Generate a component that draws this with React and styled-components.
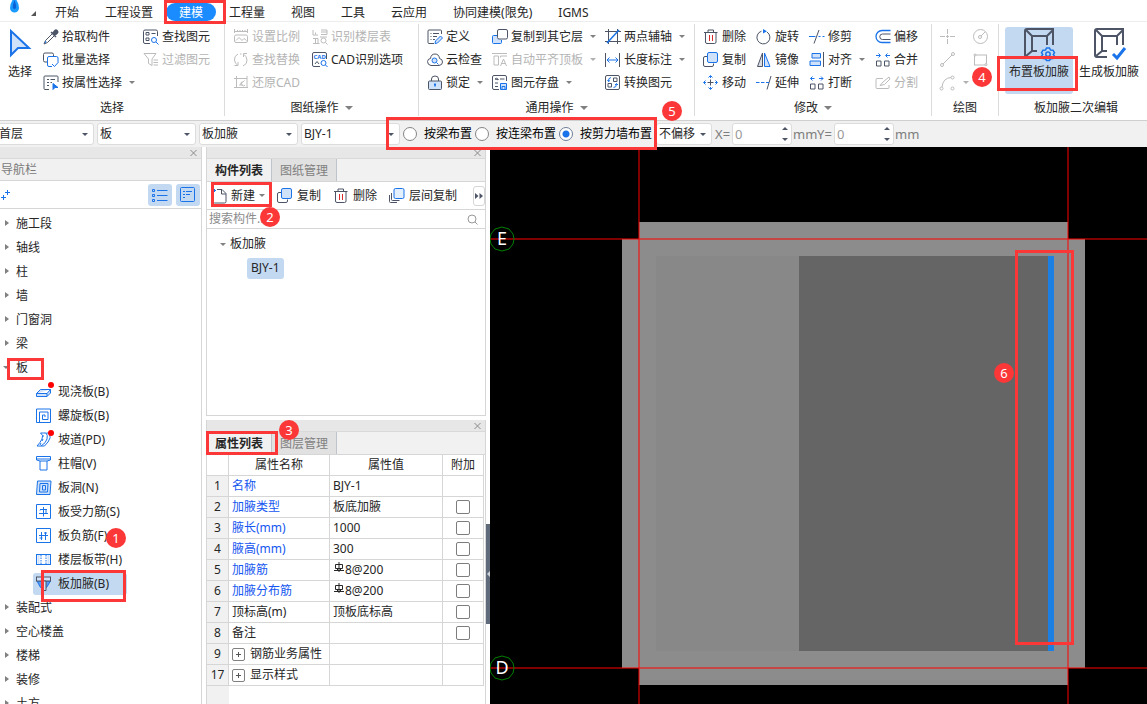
import React, { useState } from "react";
import styled, { createGlobalStyle, css } from "styled-components";

const DARK = "#4c5466";
const BLUE = "#1a73e8";
const PALE = "#cfe2fa";
const LINE = "#d6d6d6";
const PICK = "#c2d9f1";

const GlobalStyle = createGlobalStyle`
    * {
        box-sizing: border-box;
    }
    body {
        margin: 0;
        background: #fff;
    }
    body, button, input, select, table {
        font-family: "Noto Sans", "Noto Sans CJK SC", sans-serif;
        font-size: 12px;
        line-height: 16px;
        color: #262626;
    }
    button {
        margin: 0;
        padding: 0;
        border: 0;
        background: none;
        white-space: nowrap;
    }
`;

const Page = styled.div`
    display: flex;
    flex-direction: column;
    height: 100vh;
    overflow: hidden;
`;

/* ---------- annotations ---------- */

const Frame = styled.span`
    position: absolute;
    z-index: 5;
    left: ${p => p.$x}px;
    top: ${p => p.$y}px;
    width: ${p => p.$w}px;
    height: ${p => p.$h}px;
    border: 3px solid #fb3737;
    pointer-events: none;
`;

const Badge = styled.span`
    position: absolute;
    z-index: 6;
    left: ${p => p.$x}px;
    top: ${p => p.$y}px;
    width: 20px;
    height: 20px;
    border-radius: 50%;
    background: #fb3737;
    color: #fff;
    font-size: 13px;
    font-weight: 400;
    line-height: 20px;
    text-align: center;
`;

/* ---------- small parts ---------- */

const Caret = styled.span`
    flex: none;
    width: 0;
    height: 0;
    border: 3px solid transparent;
    ${p => p.$dir === "right"
        ? css`border-left: 4px solid #808080; border-right: 0;`
        : p.$dir === "up"
        ? css`border-bottom: 3px solid ${p.$color || "#808080"}; border-top: 0;`
        : css`border-top: 3px solid ${p.$color || "#808080"}; border-bottom: 0;`}
`;

const Svg = styled.svg`
    flex: none;
    display: block;
    overflow: visible;
`;

const shapes = {
    dropper: (d, b) => <>
        <path d="M9 5 2.500 11.500 1 15l3.500-1.500L11 7" stroke={d} />
        <path d="M8 3l5 5M9.500 4.500 12 1.500q1-1 2.200.2t.2 2.300L11.500 6.500z" stroke={d} fill={d} strokeWidth="1.500" />
        <path d="M3 12l-1 2" stroke={b} />
    </>,
    batch: (d, b) => <>
        <path d="M4 10H2q-1.500 0-1.500-1.500v-6Q.500 1 2 1h7q1.500 0 1.500 1.500V4" stroke={d} />
        <path d="M9 14.500H6Q4.500 14.500 4.500 13V6q0-1.500 1.500-1.500h7.500q1.500 0 1.500 1.500v4M9 12l2.500 2.500L15.500 10" stroke={b} />
    </>,
    attrPick: (d, b) => <>
        <path d="M6 14.500H2Q1 14.500 1 13.500V2Q1 1 2 1h12q1 0 1 1v5M4 4.500h2M7.500 4.500H12M4 7.500h2M7.500 7.500H9M4 10.500h2" stroke={d} />
        <path d="M10 8.500v6l2-2h3z" fill={b} stroke={b} />
    </>,
    findEl: (d, b) => <>
        <path d="M7 14.500H2Q.500 14.500.500 13V2.500Q.500 1 2 1h11q1.500 0 1.500 1.500V7M3 3.500h3v2.500H3zM3 9h3v2.500H3zM8.500 4.500h4" stroke={d} />
        <circle cx="11" cy="11" r="2.500" stroke={b} /><path d="M13 13l2.500 2.500" stroke={b} />
    </>,
    filter: d => <path d="M1 1.500h12L9 7v6.500L5.500 11.500V7zM10.500 8H15M10.500 10.500H15M10.500 13H15" stroke={d} />,
    ratio: d => <path d="M1.500 0v4M14.500 0v4M2 2.500h12M4.500 1v1.500M7 1v1.500M9.500 1v1.500M12 1v1.500M3 6h10q1.500 0 1.500 1.500V12q0 1.500-1.500 1.500H3Q1.500 13.500 1.500 12V7.500Q1.500 6 3 6zM3 11.500l3-3 3 3 2-2 2.500 2" stroke={d} />,
    replace: d => <path d="M5 2Q1 4 1.500 8t3 5M1.500 13.500H5V10M10 14q4.500-2 4-6t-3-5.500M14 1.500h-3.500V5M7 2l1.500 0" stroke={d} />,
    restore: d => <path d="M3.500 1v12M1 3.500h13M1 12.500h14M14 1v12M11.500 5.500 6.500 10h3M9 6.500q-2 1.500 0 3.500t3 0" stroke={d} />,
    floors: d => <><path d="M1 1v5h5M3.500 3.500v2M9 1h6v4.500H9M9 3h6M1 14.500h6.500M1 9.500h5v5M3.500 9.500v5M8 8h7" stroke={d} /><circle cx="11.500" cy="11.500" r="2.500" stroke={d} /><path d="M13.500 13.500l2 2" stroke={d} /></>,
    cad: (d, b) => <>
        <path d="M8 14.500H2Q.500 14.500.500 13V2Q.500.500 2 .500h11q1.500 0 1.500 1.500v5M3 12l2-2.500L7 12" stroke={d} />
        <text x="1.500" y="7" fontSize="6" fontWeight="700" fill={b} stroke="none">CAD</text>
        <circle cx="11.500" cy="11" r="2.500" stroke={b} /><path d="M13.500 13l2 2" stroke={b} />
    </>,
    define: (d, b) => <>
        <path d="M7 14.500H2Q1 14.500 1 13.500V2Q1 1 2 1h11.500q1 0 1 1v3M3.500 4.500h1M6 4.500h6M3.500 7.500h1M6 7.500h4M3.500 10.500h1M6 10.500h2" stroke={d} />
        <path d="M8 14.500l.500-2.500 5-5 2 2-5 5z" stroke={b} fill={PALE} />
    </>,
    cloud: (d, b) => <>
        <path d="M4 13.500Q.500 13 .500 9.500 1 6.500 3.500 6.500 4 2 8 2t4.500 4.500q3 .500 3 3.500t-3.500 3.500z" stroke={d} />
        <circle cx="7.500" cy="8.500" r="2.500" stroke={b} fill={PALE} /><path d="M9.500 10.500l2 2" stroke={b} />
    </>,
    lock: (d, b) => <>
        <path d="M4.500 6V4q0-3 3.500-3t3.500 3v2" stroke={d} />
        <rect x="1.500" y="6" width="13" height="8.500" rx="1" stroke={d} fill={PALE} />
        <path d="M8 8.500v3M7 9.500h2" stroke={b} strokeWidth="1.500" />
    </>,
    copyTo: (d, b) => <>
        <path d="M5 6.500H1.500q-1 0-1 1v6q0 1 1 1h7q1 0 1-1V11" stroke={b} fill={PALE} />
        <rect x="5.500" y=".5" width="10" height="9.500" rx="1.500" stroke={d} fill="#fff" />
    </>,
    flush: d => <path d="M0 1.500h15M2 4h4.500v9H2zM8.500 14l3-7 3 7M9.500 11.500h4M8.500 5.500V4H15" stroke={d} />,
    save: (d, b) => <>
        <path d="M7 14.500H2Q.500 14.500.500 13V2Q.500.500 2 .500h11q1.500 0 1.500 1.500v4M3 4q1.500-1.500 3 0t-3 0M8 4h4.500M3 8h3M3 11.500h3" stroke={d} />
        <path d="M8.500 8.500h6v6h-6zM10 14v-2.500h3V14" stroke={b} fill={PALE} />
    </>,
    twoAxis: (d, b) => <>
        <path d="M3.500 0v15M12.500 0v15M0 2.500h16M0 12.500h16" stroke={d} />
        <path d="M2 14L14 1" stroke={b} strokeWidth="1.500" />
    </>,
    length: (d, b) => <>
        <path d="M.500 1v14M14.500 1v14" stroke={d} />
        <path d="M2 8h11M4.500 5.500 2 8l2.500 2.500M10.500 5.500 13 8l-2.500 2.500" stroke={b} />
    </>,
    convert: (d, b) => <>
        <rect x=".5" y=".5" width="14" height="14" rx="1.500" stroke={d} />
        <path d="M8.500 3h3.500v3.500H8.500zM3 8.500h3.500V12H3z" stroke={d} />
        <path d="M6 2.500Q3 3 3.500 6.500M2.500 5l1 1.500L5 5.500M8.500 12.500q3 0 3-3.500M10 10l1.500-1.500L13 10" stroke={b} />
    </>,
    trash: d => <>
        <path d="M1 3.500h13.500M5 3V1h5.500v2M2.500 3.500V13q0 1.500 1.500 1.500h7.500q1.500 0 1.500-1.500V3.500" stroke={d} />
        <path d="M6.500 6v6M9.500 6v6" stroke="#d92b2b" />
    </>,
    rotate: (d, b) => <>
        <path d="M5.500 2.200A6.500 6.500 0 1 0 11 3" stroke={d} />
        <path d="M7 0l4 2.200L7 4.500z" fill={b} stroke="none" />
    </>,
    trim: (d, b) => <><path d="M10 1L5 14.500" stroke={d} /><path d="M0 7.500h6.500M9.500 7.500h2M13.500 7.500h2" stroke={b} /></>,
    offset: (d, b) => <>
        <path d="M15.500 1.500H7a6 6 0 0 0 0 12h8.500" stroke={b} strokeWidth="1.300" />
        <path d="M15.500 5H7.500a2.700 2.700 0 0 0 0 5.500h8" stroke={d} />
    </>,
    copy: (d, b) => <>
        <path d="M4 4.500H2q-1.500 0-1.500 1.500v7q0 1.500 1.500 1.500h7q1.500 0 1.500-1.500v-1.500" stroke={d} />
        <rect x="4.500" y=".5" width="10" height="10" rx="1.500" stroke={b} fill={PALE} />
    </>,
    mirror: (d, b) => <>
        <path d="M6.500 1v13.500H1.500z" stroke={d} fill="#dadde2" />
        <path d="M8.500 1v13.500H14z" stroke={b} fill={PALE} />
    </>,
    align: (d, b) => <>
        <path d="M14.500 0v15" stroke={d} />
        <path d="M3 1.500h8.500V6H3zM1 9h10.500v4.500H1z" stroke={b} fill={PALE} />
    </>,
    merge: (d, b) => <>
        <path d="M1.500 9H6v5H1.500zM9.500 9H14v5H9.500z" stroke={d} />
        <path d="M1 3.500h4M3.500 1.500l2 2-2 2M15 3.500h-4M12.500 1.500l-2 2 2 2" stroke={b} />
    </>,
    move: (d, b) => <>
        <path d="M7.500 4.500v6M4.500 7.500h6" stroke={d} />
        <path d="M5.500 2.500l2-2 2 2M5.500 12.500l2 2 2-2M2.500 5.500l-2 2 2 2M12.500 5.500l2 2-2 2M7.500 1v2M7.500 12v2M1 7.500h2M12 7.500h2" stroke={b} />
    </>,
    extend: (d, b) => <><path d="M15 1l-4 13.500" stroke={d} /><path d="M0 7.500h3.500M5 7.500h3.500M10 7.500h3" stroke={b} /></>,
    breakUp: (d, b) => <>
        <path d="M1.500 9H6v5H1.500zM9.500 9H14v5H9.500z" stroke={d} />
        <path d="M1.500 3.500h4M3.500 1.500l-2 2 2 2M14 3.500h-4M12 1.500l2 2-2 2" stroke={b} />
    </>,
    split: d => <path d="M8 3.500H2Q1 3.500 1 4.500v8q0 1 1 1h11q1 0 1-1V10M5 10.500 8 7l6-5 1 2-5.500 5.500z" stroke={d} />,
    point: d => <path d="M7.500 0v5M7.500 10v5M0 7.500h5M10 7.500h5M6 7.500h3M7.500 6v3" stroke={d} />,
    circle: d => <><circle cx="7.500" cy="7.500" r="7" stroke={d} /><circle cx="7" cy="8" r="1.500" stroke={d} /><path d="M8 7l4-4" stroke={d} /></>,
    segment: d => <><circle cx="2" cy="13" r="1.500" stroke={d} /><circle cx="13" cy="2" r="1.500" stroke={d} /><path d="M3 12l9-9" stroke={d} /></>,
    rect: d => <><rect x="1.500" y="3" width="12" height="10" stroke={d} /><circle cx="2" cy="3" r="1" stroke={d} fill="#fff" /><circle cx="13" cy="12.500" r="1" stroke={d} fill="#fff" /></>,
    arc: d => <><circle cx="1.500" cy="13.500" r="1.500" stroke={d} /><circle cx="12.500" cy="2.500" r="1.500" stroke={d} /><circle cx="12.500" cy="13.500" r="1.500" stroke={d} /><path d="M2 12Q3 3 11 2.500" stroke={d} /></>,
    newDoc: (d, b) => <>
        <path d="M6 1.500h5l4 4v8q0 1.500-1.500 1.500h-10Q2 15 2 13.500V7M10.500 1.500v4.500H15" stroke={d} />
        <path d="M2.500 0v5M0 2.500h5M1 1l3 3M4 1L1 4" stroke={b} />
    </>,
    copyFloor: (d, b) => <>
        <path d="M.500 7v6.500q0 1 1 1H8M2.500 5v6.500q0 1 1 1h7" stroke={d} />
        <rect x="5" y=".5" width="10" height="10" rx="1.500" stroke={b} fill="#e4f0fd" />
    </>,
    slab: (d, b) => <path d="M4.500 5.500h10l-3.500 4H.500zM.500 9.500v3H11l3.500-3.500V5.500M11 9.500v3" stroke={b} fill={PALE} />,
    spiral: (d, b) => <path d="M.500 1h14v13.500H.500zM3.500 14.500V4h8.500v7.500H6.500V7h2.500v2" stroke={b} />,
    ramp: (d, b) => <path d="M4.500 1q3.500 2 1.500 6T1 14h4q5-3 6-7t-1-6zM10.500 1h3q2 5-1.500 9l-3.500 4H5M7 3v2M7 7l-1 2M5 11l-1 2" stroke={b} fill="none" />,
    cap: (d, b) => <path d="M.500.500h14V4L11 5v9H4V5L.500 4zM.500 3h14M4 5h7" stroke={b} />,
    hole: (d, b) => <><path d="M1.500 1H15l-1 13.500H.500z" stroke={b} fill={PALE} /><path d="M4 3.500h8l-.5 8.500H3.500zM6.500 5.500h3v4.500h-3z" stroke={b} /></>,
    barS: (d, b) => <path d="M.500.500h14v14H.500zM4 5.500h7M3 9.500h9M7.500 3v9.500M5 5.500l-1 1M10 5.500v4" stroke={b} />,
    barF: (d, b) => <path d="M.500.500h14v14H.500zM3 7.500h9M5.500 4v8M9.500 4v8M3.500 10h3M8 5h3" stroke={b} />,
    strip: (d, b) => <><rect x=".5" y="2.500" width="14" height="10" stroke={b} /><path d="M5 3v9.500M10 3v9.500" stroke={b} strokeDasharray="1.500 1" /><path d="M2.500 3v9M12.500 3v9" stroke={PALE} strokeWidth="2" /></>,
    haunch: (d, b) => <><path d="M1 5h13.500L10.500 11.500H4.500z" stroke={b} fill="#5a9cf0" /><rect x=".5" y="1" width="14" height="4" stroke={d} fill={PALE} /><path d="M5.500 5h4.500v9.500H5.500z" stroke={d} fill={PALE} /></>
};

function Icon({ name, off }) {
    return (
        <Svg width="16" height="16" viewBox="0 0 16 16" fill="none" aria-hidden="true">
            {off ? shapes[name]("#bcbcbc", "#bcbcbc") : shapes[name](DARK, BLUE)}
        </Svg>
    );
}

/* ---------- tab bar ---------- */

const TabBar = styled.nav`
    display: flex;
    align-items: flex-end;
    flex: none;
    height: 22px;
    border-bottom: 1px solid #ededed;
`;

const Logo = styled.div`
    display: flex;
    align-items: flex-start;
    justify-content: space-between;
    width: 42px;
    height: 21px;
    padding: 0 6px 0 8px;
    svg + svg {
        margin-top: 11px;
    }
`;

const RibbonTab = styled.button`
    position: relative;
    height: 18px;
    padding: 0 13px;
    border-radius: 9px;
    line-height: 20px;
    ${p => p.$on && css`
        background: #1a8cff;
        color: #fff;
    `}
`;

/* ---------- ribbon ---------- */

const Ribbon = styled.div`
    display: flex;
    flex: none;
    height: 99px;
    padding-top: 2px;
    border-bottom: 1px solid #cfcfcf;
`;

const Group = styled.section`
    display: flex;
    flex-direction: column;
    flex: ${p => p.$w ? `0 0 ${p.$w}px` : "1 0 auto"};
    border-right: ${p => p.$w ? `1px solid #dcdcdc` : "0"};
    padding-left: ${p => p.$w ? 0 : 6}px;
    height: 92px;
`;

const Tools = styled.div`
    display: flex;
    flex: none;
    gap: ${p => p.$gap}px;
    height: 71px;
    padding: 1px 0 0 ${p => p.$pad}px;
`;

const ToolColumn = styled.div`
    display: grid;
    grid-auto-rows: 23px;
    align-items: center;
    justify-items: start;
`;

const GroupLabel = styled.div`
    display: flex;
    align-items: flex-end;
    justify-content: center;
    gap: 6px;
    height: 21px;
    ${Caret} {
        margin-bottom: 6px;
        border-width: 4px 4px 0;
    }
`;

const Tool = styled.button`
    display: flex;
    align-items: center;
    gap: 3px;
    color: ${p => p.disabled ? "#b4b4b4" : "#262626"};
    ${Caret} {
        margin-left: 4px;
    }
`;

const BigTool = styled.button`
    position: relative;
    display: flex;
    flex-direction: column;
    align-items: center;
    gap: 4px;
    width: ${p => p.$w}px;
    height: 67px;
    margin-top: 2px;
    padding-top: 1px;
    border-radius: 3px;
    background: ${p => p.$on ? PICK : "none"};
`;

const groups = [
    {
        label: "图纸操作", menu: true, w: 194, gap: 12, cols: [
            [["ratio", "设置比例", "off"], ["replace", "查找替换", "off"], ["restore", "还原CAD", "off"]],
            [["floors", "识别楼层表", "off"], ["cad", "CAD识别选项"]]
        ]
    },
    {
        label: "通用操作", menu: true, w: 276, gap: 9, cols: [
            [["define", "定义"], ["cloud", "云检查"], ["lock", "锁定", "menu"]],
            [["copyTo", "复制到其它层", "menu"], ["flush", "自动平齐顶板", "off menu"], ["save", "图元存盘", "menu"]],
            [["twoAxis", "两点辅轴", "menu"], ["length", "长度标注", "menu"], ["convert", "转换图元"]]
        ]
    },
    {
        label: "修改", menu: true, w: 237, gap: 10, cols: [
            [["trash", "删除"], ["copy", "复制"], ["move", "移动"]],
            [["rotate", "旋转"], ["mirror", "镜像"], ["extend", "延伸"]],
            [["trim", "修剪"], ["align", "对齐", "menu"], ["breakUp", "打断"]],
            [["offset", "偏移"], ["merge", "合并"], ["split", "分割", "off"]]
        ]
    },
    {
        label: "绘图", w: 67, gap: 4, cols: [
            [["point", "", "off"], ["segment", "", "off"], ["arc", "", "off menu"]],
            [["circle", "", "off"], ["rect", "", "off"]]
        ]
    }
];

const drawNames = { point: "点", segment: "直线", arc: "弧", circle: "圆", rect: "矩形" };

function ToolButton({ item }) {
    const [icon, text, flags = ""] = item;
    const off = flags.includes("off");
    return (
        <Tool type="button" disabled={off} aria-label={text || drawNames[icon]}>
            <Icon name={icon} off={off} />
            {text}
            {flags.includes("menu") && <Caret $color={off ? "#b0b0b0" : undefined} />}
        </Tool>
    );
}

function FrameIcon({ children }) {
    return (
        <Svg width="32" height="32" viewBox="0 0 32 32" fill="none" stroke={DARK} strokeWidth="2" aria-hidden="true">
            <path d="M14 29H4q-2 0-2-2V3q0-2 2-2h26v16M3 2l6 6h15l6-6M9 8v15L3 28M9 23h5M24 8v9" />
            {children}
        </Svg>
    );
}

/* ---------- options bar ---------- */

const Options = styled.div`
    display: flex;
    align-items: center;
    flex: none;
    height: 26px;
    background: #f1f1f1;
    white-space: nowrap;
`;

const Field = styled.span`
    position: relative;
    flex: none;
    width: ${p => p.$w}px;
    margin-right: ${p => p.$after || 0}px;
    height: 22px;
    ${Caret} {
        position: absolute;
        right: 6px;
        top: 10px;
    }
`;

const Select = styled.select`
    appearance: none;
    width: 100%;
    height: 22px;
    padding: 0 0 0 2px;
    border: 1px solid #dcdcdc;
    border-radius: 3px;
    background: #fff;
`;

const FirstField = styled(Field)`
    margin-left: -4px;
`;

const NumberBox = styled.input`
    appearance: textfield;
    display: block;
    width: 100%;
    height: 22px;
    padding: 0 0 0 2px;
    border: 1px solid #dcdcdc;
    border-radius: 3px;
    background: #fff;
    color: #9a9a9a;
    font-size: 13px;
    &::-webkit-inner-spin-button {
        appearance: none;
    }
`;

const Spin = styled.span`
    position: absolute;
    right: 4px;
    top: 4px;
    display: flex;
    flex-direction: column;
    gap: 8px;
    ${Caret} {
        position: static;
    }
`;

const Unit = styled.label`
    flex: none;
    width: ${p => p.$w}px;
    color: #7d7d7d;
    font-size: 13px;
`;

const Radios = styled.div`
    position: relative;
    display: flex;
    align-items: center;
    gap: 3px;
    height: 26px;
    margin-right: 4px;
`;

const RadioLabel = styled.label`
    display: flex;
    align-items: center;
    gap: 7px;
    color: #000;
`;

const Radio = styled.input`
    appearance: none;
    width: 14px;
    height: 14px;
    margin: 0;
    border: 1px solid #858585;
    border-radius: 50%;
    background: #fff;
    &:checked {
        border-color: #6d7e96;
        background: radial-gradient(circle, #1a73e8 3px, #fff 4px);
    }
`;

const modes = ["按梁布置", "按连梁布置", "按剪力墙布置"];

function Combo({ as: Wrap = Field, label, value, w, after }) {
    return (
        <Wrap $w={w} $after={after}>
            <Select aria-label={label} defaultValue={value}>
                <option>{value}</option>
            </Select>
            <Caret $color={DARK} />
        </Wrap>
    );
}

function Offset({ axis }) {
    const id = "offset-" + axis;
    return (
        <>
            <Unit htmlFor={id} $w={17}>{axis}=</Unit>
            <Field $w={60} $after={1}>
                <NumberBox id={id} type="number" defaultValue="0" />
                <Spin><Caret $dir="up" $color={DARK} /><Caret $color={DARK} /></Spin>
            </Field>
            <Unit htmlFor={id} $w={24}>mm</Unit>
        </>
    );
}

/* ---------- docked panels ---------- */

const Work = styled.div`
    display: flex;
    flex: 1;
    min-height: 0;
`;

const Strip = styled.div`
    display: flex;
    align-items: center;
    justify-content: flex-end;
    flex: none;
    height: 12px;
    padding-right: 3px;
    background: #e7e7e7;
    border-bottom: 1px solid #d9d9d9;
`;

const CloseButton = styled.button`
    display: flex;
    padding: 0;
`;

const Nav = styled.aside`
    display: flex;
    flex-direction: column;
    flex: 0 0 202px;
    margin-right: 4px;
    border-right: 1px solid ${LINE};
`;

const NavTitle = styled.div`
    flex: none;
    height: 22px;
    padding: 3px 1px;
    border-bottom: 1px solid ${LINE};
    background: #f1f1f1;
    color: #7a7a7a;
`;

const NavBar = styled.div`
    display: flex;
    align-items: center;
    flex: none;
    gap: 4px;
    height: 28px;
    padding: 0 1px;
    border-bottom: 1px solid ${LINE};
`;

const NavToggle = styled.button`
    display: grid;
    place-items: center;
    width: 24px;
    height: 22px;
    border-radius: 3px;
    background: ${PICK};
`;

const Spacer = styled.span`
    flex: 1;
`;

const Tree = styled.ul`
    flex: 1;
    margin: 0;
    padding: 3px 0 0;
    list-style: none;
    ul {
        margin: 0;
        padding: 0;
        list-style: none;
    }
    li {
        display: flow-root;
    }
`;

const TreeRow = styled.div`
    position: relative;
    display: flex;
    align-items: center;
    height: 24px;
    padding-left: 5px;
    gap: 7px;
    ${Caret} {
        margin-bottom: 2px;
    }
    ${p => p.$open && css`
        padding-left: 3px;
    `}
`;

const Leaf = styled.div`
    position: relative;
    display: flex;
    align-items: center;
    gap: 6px;
    width: 94px;
    height: 22px;
    margin: 1px 0 1px 33px;
    padding-left: 3px;
    border-radius: 3px;
    white-space: nowrap;
    background: ${p => p.$on ? PICK : "none"};
`;

const Dot = styled.span`
    position: absolute;
    left: 15px;
    top: 1px;
    width: 6px;
    height: 6px;
    border-radius: 50%;
    background: #f00;
`;

const slabTypes = [
    ["slab", "现浇板(B)", true], ["spiral", "螺旋板(B)"], ["ramp", "坡道(PD)", true],
    ["cap", "柱帽(V)"], ["hole", "板洞(N)"], ["barS", "板受力筋(S)"],
    ["barF", "板负筋(F)"], ["strip", "楼层板带(H)"], ["haunch", "板加腋(B)"]
];

const Middle = styled.div`
    display: flex;
    flex-direction: column;
    flex: 0 0 280px;
    min-width: 0;
    gap: 4px;
`;

const Panel = styled.section`
    display: flex;
    flex-direction: column;
    flex: ${p => p.$grow ? "1 1 0" : "0 0 269px"};
    min-height: 0;
    border: 1px solid ${LINE};
    border-top: 0;
    border-bottom-width: ${p => p.$grow ? 0 : 1}px;
`;

const PanelTabs = styled.div`
    display: flex;
    flex: none;
    height: 23px;
    background: #f1f1f1;
    border-bottom: 1px solid ${LINE};
`;

const PanelTab = styled.button`
    position: relative;
    padding: 2px 8px 0;
    border-right: 1px solid #bfc3ca;
    color: ${p => p.$on ? "#262626" : "#808080"};
    font-weight: ${p => p.$on ? 700 : 400};
    background: ${p => p.$on ? "#f1f1f1" : "#e1e1e1"};
`;

const PanelBar = styled.div`
    display: flex;
    align-items: center;
    flex: none;
    gap: 12px;
    height: 28px;
    padding-left: 4px;
    border-bottom: 1px solid ${LINE};
`;

const PanelTool = styled.button`
    position: relative;
    display: flex;
    align-items: center;
    gap: 4px;
`;

const More = styled.button`
    display: grid;
    place-items: center;
    width: 12px;
    height: 20px;
    margin-left: auto;
    border: 1px solid ${LINE};
    border-radius: 3px;
`;

const SearchRow = styled.label`
    display: flex;
    align-items: center;
    flex: none;
    height: 19px;
    padding: 0 7px 0 2px;
    border-bottom: 1px solid ${LINE};
`;

const SearchInput = styled.input`
    flex: 1;
    min-width: 0;
    padding: 0;
    border: 0;
    outline: 0;
    &::placeholder {
        color: #8c8c8c;
    }
`;

const PartTree = styled.div`
    flex: 1;
    padding: 3px 0 0 13px;
`;

const PartRow = styled.div`
    display: flex;
    align-items: center;
    gap: 4px;
    height: 24px;
`;

const PartChip = styled.button`
    height: 21px;
    margin-left: 27px;
    padding: 0 4px;
    border-radius: 3px;
    background: ${PICK};
`;

const Table = styled.table`
    width: 277px;
    border-spacing: 0;
    table-layout: fixed;
    td, th {
        height: 21px;
        padding: 0 3px;
        border-right: 1px solid ${LINE};
        border-bottom: 1px solid ${LINE};
        font-weight: 400;
        text-align: left;
        white-space: nowrap;
    }
    thead th {
        padding: 0;
        text-align: center;
    }
    tbody th {
        padding: 0;
        background: #f1f1f1;
        text-align: center;
    }
`;

const NameCell = styled.td`
    color: ${p => p.$key ? "#1557f0" : "#262626"};
`;

const Check = styled.input`
    appearance: none;
    display: block;
    width: 14px;
    height: 14px;
    margin: 0 auto;
    border: 1px solid #7d7d7d;
    border-radius: 2px;
    background: #fff;
`;

const Line = styled.span`
    display: flex;
    align-items: ${p => p.$top ? "flex-start" : "center"};
    gap: ${p => p.$gap || 0}px;
`;

const Expand = styled.button`
    display: grid;
    place-items: center;
    width: 13px;
    height: 13px;
    border: 1px solid #808080;
    border-radius: 2px;
`;

const Gutter = styled.div`
    flex: 1;
    width: 22px;
    background: #f1f1f1;
`;

const rows = [
    [1, "名称", "BJY-1", "key"],
    [2, "加腋类型", "板底加腋", "key check"],
    [3, "腋长(mm)", "1000", "key check"],
    [4, "腋高(mm)", "300", "key check"],
    [5, "加腋筋", "8@200", "key check bar"],
    [6, "加腋分布筋", "8@200", "key check bar"],
    [7, "顶标高(m)", "顶板底标高", "check"],
    [8, "备注", "", "check"],
    [9, "钢筋业务属性", "", "group"],
    [17, "显示样式", "", "group"]
];

const Splitter = styled.div`
    flex: 0 0 4px;
    padding-top: 377px;
    button {
        display: grid;
        place-items: center;
        width: 4px;
        height: 100px;
        background: #5f6b7a;
    }
`;

const Canvas = styled.main`
    position: relative;
    flex: 1;
    min-width: 0;
    background: #000;
`;

const Drawing = styled(Svg)`
    position: absolute;
    inset: 0;
    width: 100%;
    height: 100%;
    overflow: hidden;
`;

function CloseX() {
    return (
        <CloseButton type="button" aria-label="关闭">
            <Svg width="9" height="8" viewBox="0 0 9 8" stroke="#8a8a8a"><path d="M1.500 1l6 6M7.500 1l-6 6" /></Svg>
        </CloseButton>
    );
}

function NavPanel() {
    const before = ["施工段", "轴线", "柱", "墙", "门窗洞", "梁"];
    const after = ["装配式", "空心楼盖", "楼梯", "装修", "土方"];
    const closed = name => <li key={name}><TreeRow><Caret $dir="right" />{name}</TreeRow></li>;
    return (
        <Nav>
            <Strip><CloseX /></Strip>
            <NavTitle>导航栏</NavTitle>
            <NavBar>
                <Svg width="10" height="12" viewBox="0 0 10 12" stroke={BLUE}><path d="M0 8.500h5M2.500 6v5M4 3.500h5M6.500 1v5" /></Svg>
                <Spacer />
                <NavToggle type="button" aria-label="列表">
                    <Svg width="16" height="14" viewBox="0 0 16 14" stroke={BLUE} fill="none"><path d="M5 2.500h10.500M5 7.500h10.500M5 12.500h10.500M.500 1.500h2v2h-2zM.500 6.500h2v2h-2zM.500 11.500h2v2h-2z" /></Svg>
                </NavToggle>
                <NavToggle type="button" aria-label="详情">
                    <Svg width="16" height="16" viewBox="0 0 16 16" stroke={BLUE} fill="none"><rect x=".5" y=".5" width="14" height="14" rx="1" /><path d="M3 4.500h2M6 4.500h6M3 7.500h2M6 7.500h4M3 10.500h2" /></Svg>
                </NavToggle>
            </NavBar>
            <Tree>
                {before.map(closed)}
                <li>
                    <TreeRow $open><Caret />板<Frame $x={7} $y={2} $w={37} $h={22} /></TreeRow>
                    <ul>
                        {slabTypes.map(([icon, name, dot]) => (
                            <li key={name}>
                                <Leaf $on={icon === "haunch"}>
                                    <Icon name={icon} />
                                    {name}
                                    {dot && <Dot />}
                                    {icon === "haunch" && <><Frame $x={8} $y={-3} $w={85} $h={32} /><Badge $x={73} $y={-45}>1</Badge></>}
                                </Leaf>
                            </li>
                        ))}
                    </ul>
                </li>
                {after.map(closed)}
            </Tree>
        </Nav>
    );
}

function PartPanel() {
    return (
        <Panel>
            <Strip><CloseX /></Strip>
            <PanelTabs>
                <PanelTab type="button" $on>构件列表</PanelTab>
                <PanelTab type="button">图纸管理</PanelTab>
            </PanelTabs>
            <PanelBar>
                <PanelTool type="button">
                    <Icon name="newDoc" />新建<Caret />
                    <Frame $x={0} $y={-6} $w={61} $h={25} />
                    <Badge $x={49} $y={19}>2</Badge>
                </PanelTool>
                <PanelTool type="button"><Icon name="copy" />复制</PanelTool>
                <PanelTool type="button"><Icon name="trash" />删除</PanelTool>
                <PanelTool type="button"><Icon name="copyFloor" />层间复制</PanelTool>
                <More type="button" aria-label="更多">
                    <Svg width="8" height="6" viewBox="0 0 8 6" fill={DARK}><path d="M0 0l3.500 3L0 6zM4.500 0L8 3 4.500 6z" /></Svg>
                </More>
            </PanelBar>
            <SearchRow>
                <SearchInput type="text" placeholder="搜索构件..." aria-label="搜索构件" />
                <Svg width="11" height="11" viewBox="0 0 11 11" fill="none" stroke="#999"><circle cx="5" cy="5" r="4" /><path d="M8 8l2.500 2.500" /></Svg>
            </SearchRow>
            <PartTree>
                <PartRow><Caret />板加腋</PartRow>
                <PartRow><PartChip type="button">BJY-1</PartChip></PartRow>
            </PartTree>
        </Panel>
    );
}

function PropPanel() {
    return (
        <Panel $grow>
            <Strip><CloseX /></Strip>
            <PanelTabs>
                <PanelTab type="button" $on>
                    属性列表
                    <Frame $x={-1} $y={-1} $w={72} $h={24} />
                    <Badge $x={72} $y={-12}>3</Badge>
                </PanelTab>
                <PanelTab type="button">图层管理</PanelTab>
            </PanelTabs>
            <Table>
                <colgroup>
                    <col style={{ width: 22 }} />
                    <col style={{ width: 101 }} />
                    <col style={{ width: 113 }} />
                    <col style={{ width: 41 }} />
                </colgroup>
                <thead>
                    <tr><th aria-label="序号" /><th>属性名称</th><th>属性值</th><th>附加</th></tr>
                </thead>
                <tbody>
                    {rows.map(([no, name, value, flags]) => (
                        <tr key={no}>
                            <th scope="row">{no}</th>
                            <NameCell $key={flags.includes("key")}>
                                {flags.includes("group")
                                    ? <Line $gap={5}>
                                        <Expand type="button" aria-label={"展开" + name}>
                                            <Svg width="5" height="5" viewBox="0 0 5 5" stroke="#555"><path d="M0 2.500h5M2.500 0v5" /></Svg>
                                        </Expand>
                                        {name}
                                    </Line>
                                    : name}
                            </NameCell>
                            <td>
                                {flags.includes("bar")
                                    ? <Line $gap={1} $top>
                                        <Svg width="11" height="12" viewBox="0 0 11 12" fill="none" stroke="#262626"><path d="M2.500 2.500h7v4h-7zM6 0v10M1 8.500h10M4.500 6.500v2M7.500 6.500v2" /></Svg>
                                        {value}
                                    </Line>
                                    : value}
                            </td>
                            <td>{flags.includes("check") && <Check type="checkbox" aria-label={name + "附加"} />}</td>
                        </tr>
                    ))}
                </tbody>
            </Table>
            <Gutter />
        </Panel>
    );
}

function ModelView() {
    return (
        <Canvas>
            <Drawing role="img" aria-label="平面视图">
                <path d="M149 75h429v17h17v429h-17v17H149v-17h-17V92h17z" fill="#8c8c8c" />
                <rect x="166" y="109" width="143" height="395" fill="#888" />
                <rect x="309" y="109" width="249" height="395" fill="#656565" />
                <rect x="558" y="109" width="6" height="395" fill="#1b7fe3" />
                <g fill="#f00" fillOpacity=".5">
                    <rect x="0" y="91" width="100%" height="2" />
                    <rect x="0" y="520" width="100%" height="2" />
                    <rect x="148" y="0" width="2" height="100%" />
                    <rect x="577" y="0" width="2" height="100%" />
                </g>
                <g fill="none" stroke="#008000">
                    <path d="M12 80l7 2 4 5 1 5-1 5-4 5-7 2-7-2-4-5-1-5 1-5 4-5z" />
                    <path d="M12 509l7 2 4 5 1 5-1 5-4 5-7 2-7-2-4-5-1-5 1-5 4-5z" />
                </g>
                <g fill="#fff" fontSize="18" textAnchor="middle">
                    <text x="12" y="98">E</text>
                    <text x="12" y="527">D</text>
                </g>
            </Drawing>
            <Frame $x={525} $y={103} $w={59} $h={395} />
            <Badge $x={504} $y={216}>6</Badge>
        </Canvas>
    );
}

function App() {
    const [mode, setMode] = useState(modes[2]);
    const tabs = ["开始", "工程设置", "建模", "工程量", "视图", "工具", "云应用", "协同建模(限免)", "IGMS"];

    return (
        <Page>
            <GlobalStyle />
            <TabBar>
                <Logo>
                    <Svg width="13" height="13" viewBox="0 0 13 13">
                        <path d="M4.500 0Q2 4 2 8A4.500 4.500 0 0 0 11 8Q11 4 8.500 0z" fill="#1a9bff" />
                        <path d="M6.500 0Q4.500 5 4.800 8q1.700 2 3.400 0Q8.500 5 6.500 0z" fill="#0b62d6" />
                    </Svg>
                    <Svg width="5" height="5" viewBox="0 0 5 5"><path d="M5 0v5H0z" fill="#555" /></Svg>
                </Logo>
                {tabs.map(t => (
                    <RibbonTab key={t} type="button" $on={t === "建模"}>
                        {t}
                        {t === "建模" && <Frame $x={-2} $y={-3} $w={62} $h={24} />}
                    </RibbonTab>
                ))}
            </TabBar>

            <Ribbon>
                <Group $w={225}>
                    <Tools $gap={8} $pad={5}>
                        <BigTool type="button" $w={30}>
                            <Svg width="28" height="32" viewBox="0 0 28 32">
                                <path d="M5 3v24l7-7h11z" fill={PALE} stroke={BLUE} strokeWidth="2" />
                            </Svg>
                            选择
                        </BigTool>
                        <ToolColumn>
                            <ToolButton item={["dropper", "拾取构件"]} />
                            <ToolButton item={["batch", "批量选择"]} />
                            <ToolButton item={["attrPick", "按属性选择", "menu"]} />
                        </ToolColumn>
                        <ToolColumn>
                            <ToolButton item={["findEl", "查找图元"]} />
                            <ToolButton item={["filter", "过滤图元", "off"]} />
                        </ToolColumn>
                    </Tools>
                    <GroupLabel>选择</GroupLabel>
                </Group>
                {groups.map(g => (
                    <Group key={g.label} $w={g.w}>
                        <Tools $gap={g.gap} $pad={8}>
                            {g.cols.map((col, i) => (
                                <ToolColumn key={i}>
                                    {col.map(item => <ToolButton key={item[0]} item={item} />)}
                                </ToolColumn>
                            ))}
                        </Tools>
                        <GroupLabel>{g.label}{g.menu && <Caret />}</GroupLabel>
                    </Group>
                ))}
                <Group>
                    <Tools $gap={2} $pad={0}>
                        <BigTool type="button" $w={68} $on>
                            <FrameIcon>
                                <g stroke={BLUE} strokeWidth="1.500">
                                    <path d="M23.500 20h3l1 2 2.500.2 1.500 2.600-1.200 1.700 1.200 1.700-1.500 2.300-2.500.3-1 1.700h-3l-1-1.700-2.500-.3-1.500-2.300 1.200-1.700-1.200-1.700L20 22.200l2.500-.2z" />
                                    <circle cx="25" cy="26.200" r="2.200" />
                                </g>
                            </FrameIcon>
                            布置板加腋
                            <Frame $x={-8} $y={29} $w={81} $h={35} />
                            <Badge $x={-33} $y={40}>4</Badge>
                        </BigTool>
                        <BigTool type="button" $w={68}>
                            <FrameIcon><path d="M20 26l4 4 8-10" stroke={BLUE} strokeWidth="3" /></FrameIcon>
                            生成板加腋
                        </BigTool>
                    </Tools>
                    <GroupLabel>板加腋二次编辑</GroupLabel>
                </Group>
            </Ribbon>

            <Options>
                <Combo as={FirstField} label="楼层" value="首层" w={98} after={3} />
                <Combo label="类别" value="板" w={99} after={3} />
                <Combo label="构件类型" value="板加腋" w={99} after={3} />
                <Combo label="构件" value="BJY-1" w={99} after={3} />
                <Radios>
                    {modes.map(m => (
                        <RadioLabel key={m}>
                            <Radio type="radio" name="mode" checked={mode === m} onChange={() => setMode(m)} />
                            {m}
                        </RadioLabel>
                    ))}
                    <Frame $x={-17} $y={-4} $w={271} $h={33} />
                    <Badge $x={259} $y={-20}>5</Badge>
                </Radios>
                <Combo label="偏移方式" value="不偏移" w={56} after={3} />
                <Offset axis="X" />
                <Offset axis="Y" />
            </Options>

            <Work>
                <NavPanel />
                <Middle>
                    <PartPanel />
                    <PropPanel />
                </Middle>
                <Splitter>
                    <button type="button" aria-label="折叠">
                        <Svg width="3" height="6" viewBox="0 0 3 6"><path d="M3 0v6L0 3z" fill="#cfd4da" /></Svg>
                    </button>
                </Splitter>
                <ModelView />
            </Work>
        </Page>
    );
}

export default App;
